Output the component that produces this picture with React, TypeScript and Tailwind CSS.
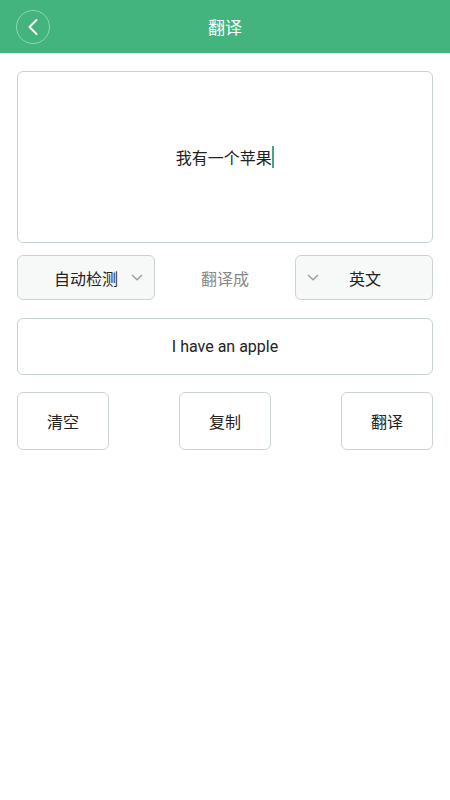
import React from "react";

const font = { fontFamily: '"Noto Sans CJK SC", "Noto Sans", sans-serif' };

function Chevron() {
  return (
    <svg width="12" height="7" viewBox="0 0 12 7" fill="none">
      <path d="M1 1 L6 5.8 L11 1" stroke="#9a9f9f" strokeWidth="1.4" />
    </svg>
  );
}

export default function App() {
  return (
    <div className="w-[450px] h-[800px] bg-white" style={font}>
      <div className="h-[53px] bg-[#43b47d] flex items-center relative">
        <div className="ml-[16px] w-[34px] h-[34px] rounded-full border border-[#8fd6b1] flex items-center justify-center">
          <svg width="12" height="18" viewBox="0 0 12 18" fill="none">
            <path d="M9.5 2 L2.5 9 L9.5 16" stroke="white" strokeWidth="2" strokeLinecap="round" strokeLinejoin="round" />
          </svg>
        </div>
        <div className="absolute inset-0 flex items-center justify-center text-white text-[17px]">翻译</div>
      </div>
      <div className="px-[17px] pt-[18px] flex flex-col">
        <div className="h-[172px] border border-[#c8d2d2] rounded-[6px] flex items-center justify-center">
          <span className="text-[16px] text-[#222] flex items-center">
            我有一个苹果
            <span className="inline-block w-[2.5px] h-[22px] bg-[#4aa57e]"></span>
          </span>
        </div>
        <div className="mt-[12px] flex items-center justify-between h-[45px]">
          <div className="w-[138px] h-[45px] border border-[#ccd3d3] rounded-[6px] bg-[#f7f8f8] flex items-center pl-[36px] pr-[11px] justify-between">
            <span className="text-[16px] text-[#222]">自动检测</span>
            <Chevron />
          </div>
          <span className="text-[16px] text-[#888]">翻译成</span>
          <div className="w-[138px] h-[45px] border border-[#ccd3d3] rounded-[6px] bg-[#f7f8f8] flex items-center pl-[11px]">
            <Chevron />
            <span className="ml-[30px] text-[16px] text-[#222]">英文</span>
          </div>
        </div>
        <div className="mt-[18px] h-[57px] border border-[#c8d2d2] rounded-[6px] flex items-center justify-center">
          <span className="text-[16px] text-[#222]" style={{ fontFamily: 'Roboto, "Noto Sans", sans-serif' }}>I have an apple</span>
        </div>
        <div className="mt-[17px] flex justify-between">
          {["清空", "复制", "翻译"].map((t) => (
            <div key={t} className="w-[92px] h-[58px] border border-[#ccd3d3] rounded-[6px] flex items-center justify-center text-[16px] text-[#222]">
              {t}
            </div>
          ))}
        </div>
      </div>
    </div>
  );
}
